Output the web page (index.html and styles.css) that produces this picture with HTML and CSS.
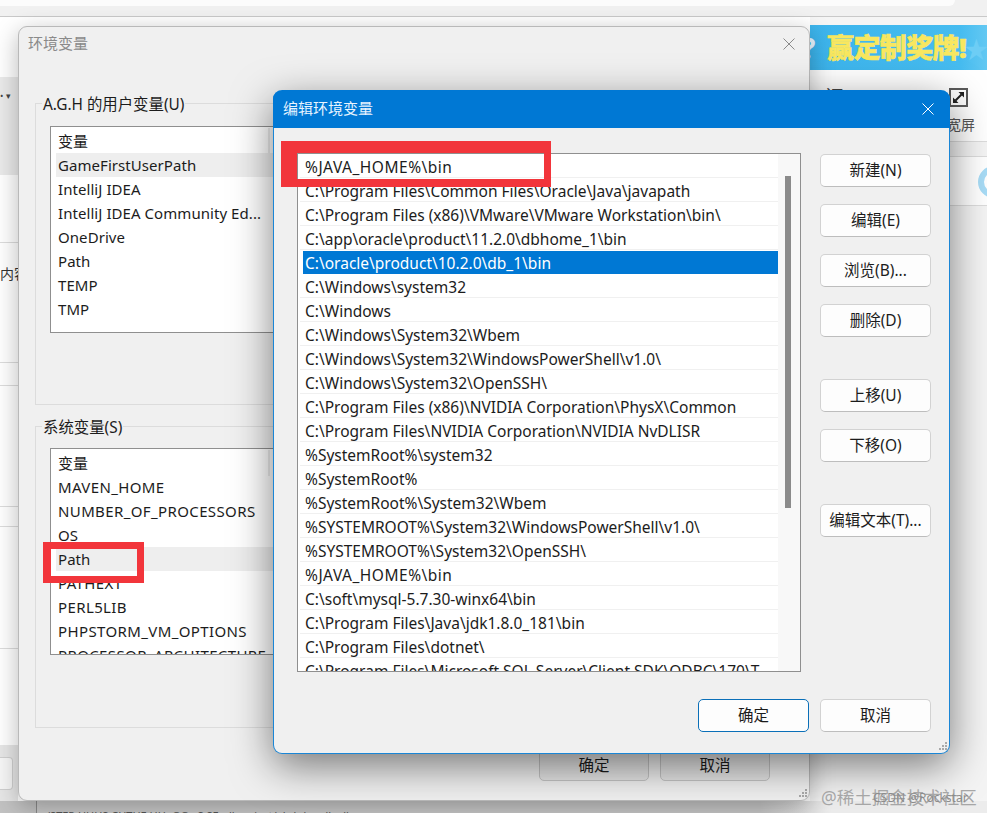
FILE: index.html
```html
<!DOCTYPE html>
<html lang="zh-CN">
<head>
<meta charset="utf-8">
<title>编辑环境变量</title>
<link rel="stylesheet" href="styles.css">
</head>
<body>
<div class="desktop">
  <div class="page">
    <div class="topbar"><div class="addr"></div></div>
    <div class="page-main">
      <div class="side-left">
        <div class="sl a"></div>
        <div class="sl b"><span class="dots">• ▾</span></div>
        <div class="sl c"></div>
        <div class="sl d"><span class="nei">内容</span></div>
        <div class="sl e"></div>
        <div class="sl f"></div>
        <div class="sl g"></div>
        <div class="sl h"></div>
        <div class="sl i"><div class="ghost-btn"></div></div>
      </div>
      <div class="side-right">
        <div class="banner"><span class="q">?</span><span class="prize">赢定制奖牌!</span><span class="star">★</span></div>
        <div class="tools">
          <span class="tool-cut">订</span>
          <span class="tool-cut dot">•</span>
          <div class="tool-wide">
            <svg class="expand" viewBox="0 0 19 19" width="19" height="19"><rect x="1" y="1" width="17" height="17" fill="none" stroke="#5a5a5a" stroke-width="2"/><path d="M6.500 12.500 12.500 6.500" fill="none" stroke="#222" stroke-width="2"/><path d="M15 4H9.500L15 9.500ZM4 15H9.500L4 9.500Z" fill="#222"/></svg>
            <span>宽屏</span>
          </div>
        </div>
        <div class="strip"></div>
        <div class="author"><div class="avatar"></div></div>
        <div class="fill"></div>
      </div>
    </div>
    <div class="bottom-strip"><span>/STEP HHHS CHTHE HH&lt;OOc S:SEmll   roject/abdc/ne dhs.lln</span></div>
  </div>

  <section class="win env-win">
    <header class="env-title"><span>环境变量</span>
      <svg class="close" viewBox="0 0 12 12" width="12" height="12"><path d="M.5.5l11 11M11.500.5l-11 11" stroke="#8a8a8a" fill="none"/></svg>
    </header>
    <div class="group">
      <div class="group-label">A.G.H 的用户变量(U)</div>
      <div class="var-list">
        <div class="var-head"><span>变量</span></div>
        <div class="var-row hl">GameFirstUserPath</div>
        <div class="var-row">IntelliJ IDEA</div>
        <div class="var-row">IntelliJ IDEA Community Ed...</div>
        <div class="var-row">OneDrive</div>
        <div class="var-row">Path</div>
        <div class="var-row">TEMP</div>
        <div class="var-row">TMP</div>
      </div>
    </div>
    <div class="group group-sys">
      <div class="group-label">系统变量(S)</div>
      <div class="var-list">
        <div class="var-head"><span>变量</span></div>
        <div class="var-row caps">MAVEN_HOME</div>
        <div class="var-row caps">NUMBER_OF_PROCESSORS</div>
        <div class="var-row">OS</div>
        <div class="var-row hl">Path</div>
        <div class="var-row caps">PATHEXT</div>
        <div class="var-row caps">PERL5LIB</div>
        <div class="var-row caps">PHPSTORM_VM_OPTIONS</div>
        <div class="var-row caps">PROCESSOR_ARCHITECTURE</div>
      </div>
    </div>
    <footer class="env-foot">
      <button class="btn env-btn">确定</button>
      <button class="btn env-btn">取消</button>
    </footer>
    <svg class="grip grip-env" viewBox="0 0 11 11" width="11" height="11"><path d="M8 1h2v2H8zM5 4h2v2H5zM8 4h2v2H8zM2 7h2v2H2zM5 7h2v2H5zM8 7h2v2H8z" fill="#a9a9a9"/></svg>
  </section>

  <section class="win edit-win">
    <header class="edit-title"><span>编辑环境变量</span>
      <svg class="close" viewBox="0 0 12 12" width="12" height="12"><path d="M.5.5l11 11M11.500.5l-11 11" stroke="#fff" fill="none"/></svg>
    </header>
    <div class="edit-body">
      <div class="path-list">
        <div class="path-rows">
          <div class="path-row wide"><span>%JAVA_HOME%\bin</span></div>
          <div class="path-row"><span>C:\Program Files\Common Files\Oracle\Java\javapath</span></div>
          <div class="path-row"><span>C:\Program Files (x86)\VMware\VMware Workstation\bin\</span></div>
          <div class="path-row"><span>C:\app\oracle\product\11.2.0\dbhome_1\bin</span></div>
          <div class="path-row sel"><span>C:\oracle\product\10.2.0\db_1\bin</span></div>
          <div class="path-row"><span>C:\Windows\system32</span></div>
          <div class="path-row"><span>C:\Windows</span></div>
          <div class="path-row"><span>C:\Windows\System32\Wbem</span></div>
          <div class="path-row"><span>C:\Windows\System32\WindowsPowerShell\v1.0\</span></div>
          <div class="path-row"><span>C:\Windows\System32\OpenSSH\</span></div>
          <div class="path-row"><span>C:\Program Files (x86)\NVIDIA Corporation\PhysX\Common</span></div>
          <div class="path-row"><span>C:\Program Files\NVIDIA Corporation\NVIDIA NvDLISR</span></div>
          <div class="path-row"><span>%SystemRoot%\system32</span></div>
          <div class="path-row"><span>%SystemRoot%</span></div>
          <div class="path-row"><span>%SystemRoot%\System32\Wbem</span></div>
          <div class="path-row"><span>%SYSTEMROOT%\System32\WindowsPowerShell\v1.0\</span></div>
          <div class="path-row"><span>%SYSTEMROOT%\System32\OpenSSH\</span></div>
          <div class="path-row wide"><span>%JAVA_HOME%\bin</span></div>
          <div class="path-row"><span>C:\soft\mysql-5.7.30-winx64\bin</span></div>
          <div class="path-row"><span>C:\Program Files\Java\jdk1.8.0_181\bin</span></div>
          <div class="path-row"><span>C:\Program Files\dotnet\</span></div>
          <div class="path-row"><span>C:\Program Files\Microsoft SQL Server\Client SDK\ODBC\170\T</span></div>
        </div>
        <div class="scroll"><div class="thumb"></div></div>
      </div>
      <div class="side-btns">
        <button class="btn">新建(N)</button>
        <button class="btn">编辑(E)</button>
        <button class="btn">浏览(B)...</button>
        <button class="btn">删除(D)</button>
        <button class="btn gap-top">上移(U)</button>
        <button class="btn">下移(O)</button>
        <button class="btn gap-top">编辑文本(T)...</button>
      </div>
    </div>
    <footer class="edit-foot">
      <button class="btn primary">确定</button>
      <button class="btn">取消</button>
    </footer>
    <svg class="grip grip-edit" viewBox="0 0 11 11" width="11" height="11"><path d="M8 1h2v2H8zM5 4h2v2H5zM8 4h2v2H8zM2 7h2v2H2zM5 7h2v2H5zM8 7h2v2H8z" fill="#a9a9a9"/></svg>
  </section>

  <div class="mark mark-java"></div>
  <div class="mark mark-path"></div>
  <div class="wm"><span class="wm-a">@稀土掘金技术社区</span><span class="wm-b">CSDN @Rockstar</span></div>
</div>
</body>
</html>
```
FILE: styles.css
```css
* { box-sizing: border-box; }
html, body { margin: 0; padding: 0; }
body { width: 987px; height: 813px; overflow: hidden; background: #fff; }
.desktop {
  position: relative; width: 987px; height: 813px; overflow: hidden;
  font-family: "Noto Sans", "Noto Sans CJK SC", sans-serif;
  font-size: 15px; color: #1c1c1c;
}
.page { display: flex; flex-direction: column; height: 813px; background: #fff; }
.topbar { height: 17px; background: #f1f1f1; border-bottom: 1px solid #c9c9c9; flex: none; }
.addr { height: 6px; width: 955px; background: #fcfcfc; border-radius: 0 0 6px 0; }
.page-main { display: flex; justify-content: space-between; height: 784px; flex: none; }
.side-left { width: 18px; display: flex; flex-direction: column; overflow: hidden; }
.sl { flex: none; border-bottom: 1px solid #dcdcdc; position: relative; white-space: nowrap; }
.sl.a { height: 60px; border: 0; }
.sl.b { height: 98px; background: #eaeaea; border: 0; padding-top: 12px; }
.dots { font-size: 9px; line-height: 14px; color: #444; display: block; }
.sl.c { height: 68px; }
.sl.d { height: 120px; padding-top: 20px; }
.nei { font-size: 14px; line-height: 20px; color: #333; }
.sl.e { height: 23px; }
.sl.f { height: 121px; }
.sl.g { height: 20px; }
.sl.h { height: 122px; }
.sl.i { height: 152px; border: 0; padding-top: 108px; background: linear-gradient(#fff 96px, #e6e6e6 96px); }
.ghost-btn { width: 13px; height: 33px; background: #f6f6f6; border: 1px solid #cfcfcf; border-left: 0; border-radius: 0 4px 4px 0; }
.side-right { width: 177px; display: flex; flex-direction: column; background: #f5f5f5; overflow: hidden; }
.banner {
  flex: none; margin-top: 8px; height: 45px; display: flex; align-items: center; overflow: hidden; white-space: nowrap;
  background: linear-gradient(90deg, #3cb4ec, #46bcf0 85%, #63c8f2);
}
.q { color: #e8f6ff; font-weight: 700; font-size: 28px; margin-left: -8px; width: 25px; flex: none; }
.prize { color: #f8e75f; font-weight: 900; font-size: 27px; letter-spacing: -.6px; line-height: 45px; -webkit-text-stroke: .5px #f8e75f; }
.star { color: #6dcdf5; font-size: 24px; margin-left: -2px; }
.tools {
  flex: none; height: 72px; background: #fff; border-bottom: 1px solid #dcdcdc; display: flex; padding-left: 15px; overflow: hidden;
}
.tool-cut { font-size: 18px; line-height: 22px; margin-top: 15px; color: #444; width: 72px; flex: none; }
.tool-cut.dot { width: 52px; }
.tool-wide { display: flex; flex-direction: column; align-items: flex-start; padding-top: 18px; font-size: 14px; color: #555; }
.expand { display: block; margin-bottom: 8px; }
.tool-wide span { line-height: 20px; margin-left: -2px; }
.strip { height: 15px; flex: none; border-bottom: 1px solid #dcdcdc; background: #f4f4f4; }
.author { height: 49px; flex: none; background: #fff; border-bottom: 1px solid #dcdcdc; padding: 9px 0 0 168px; }
.avatar { width: 32px; height: 32px; border-radius: 50%; border: 6px solid #a8dcf6; background: #fff; }
.fill { flex: 1; background: #f4f4f4; }
.bottom-strip {
  height: 12px; flex: none; padding: 9px 0 0 46px; overflow: hidden;
  background: linear-gradient(90deg, #c2c2c2 36px, #8a8a8a 36px, #8a8a8a 37px, #c8c8c8 37px, #c8c8c8 760px, #ececec 830px);
  font-size: 11px; line-height: 12px; color: #555; white-space: pre;
}

.win { position: absolute; }
.env-win {
  left: 18px; top: 26px; width: 792px; height: 775px; padding: 0 16px;
  background: #f0f0f0; border: 1px solid #b9b9b9; border-radius: 9px;
  box-shadow: 0 6px 24px rgba(0,0,0,.28);
}
.env-title { height: 76px; display: flex; justify-content: space-between; padding-top: 6px; color: #8a8a8a; }
.env-title span { margin-left: -7px; line-height: 20px; }
.env-title .close { margin: 5px -2px 0 0; }
.group { height: 302px; border: 1px solid #dcdcdc; padding: 0 14px; }
.group-sys { margin-top: 21px; }
.group-label { margin: -11px 0 0 -8px; width: fit-content; background: #f0f0f0; padding: 0 1px; font-size: 15.400px; line-height: 24px; height: 20px; }
.var-list {
  margin-top: 13px; height: 207px; background: #fff; border: 1px solid #8f8f8f; padding: 3px 5px 0; overflow: hidden;
}
.group-sys .var-list { margin-top: 12px; }
.var-head { height: 24px; padding-left: 2px; margin-top: -1px; margin-bottom: 1px; }
.var-head span { display: block; width: 212px; border-right: 2px solid #ececec; height: 26px; margin-top: -2px; line-height: 26px; }
.var-row { height: 24px; line-height: 25px; padding-left: 2px; white-space: nowrap; letter-spacing: .06px; }
.var-row.caps { letter-spacing: .38px; }
.var-row.hl { background: #eeeeee; }
.env-foot { display: flex; justify-content: flex-end; gap: 11px; padding: 20px 23px 0 0; }
.btn {
  width: 111px; height: 33px; margin: 0; padding: 0 0 2px; flex: none;
  background: #fdfdfd; border: 1px solid #d2d2d2; border-bottom-color: #bdbdbd; border-radius: 5px;
  font: inherit; font-size: 15.500px; color: #1c1c1c; white-space: nowrap;
}
.env-btn { width: 110px; height: 33px; padding: 0; background: #e6e6e6; border-color: #c4c4c4; }
.grip { position: absolute; }
.grip-env { right: 1px; bottom: 1px; }
.grip-edit { right: 1px; bottom: 1px; }

.edit-win {
  left: 273px; top: 90px; width: 677px; height: 664px;
  background: #f0f0f0; border: 1px solid #1a86d6; border-top: 0; border-radius: 9px;
  box-shadow: 0 12px 40px rgba(0,0,0,.5);
}
.edit-title {
  height: 38px; margin: 0 -1px; background: #0078d4; color: #e8f4ff; border-radius: 9px 9px 0 0;
  display: flex; justify-content: space-between; align-items: flex-start; padding: 8px 16px 0 10px;
  line-height: 20px;
}
.edit-title .close { margin-top: 5px; }
.edit-body { display: flex; padding: 25px 0 0 23px; }
.path-list {
  width: 504px; height: 519px; background: #fff; border: 1px solid #8f8f8f; display: flex; overflow: hidden; flex: none;
}
.path-rows { flex: 1; min-width: 0; padding: 0 0 0 2px; font-size: 15.500px; }
.path-row { height: 24px; border-bottom: 1px solid #f0f0f0; padding: 0 0 0 3px; line-height: 27px; white-space: nowrap; overflow: hidden; }
.path-row.wide { letter-spacing: .5px; }
.path-row span { display: block; padding-left: 2px; height: 23px; }
.path-row.sel { border-bottom: 0; padding-top: 1px; line-height: 24px; }
.path-row.sel span { background: #0078d4; color: #fff; }
.scroll { width: 22px; flex: none; background: #f8f8f8; padding: 22px 0 0 7px; }
.thumb { width: 6px; height: 332px; background: #8b8b8b; }
.side-btns { display: flex; flex-direction: column; gap: 17px; margin-left: 19px; padding-top: 1px; }
.gap-top { margin-top: 25px; }
.edit-foot { display: flex; justify-content: flex-end; gap: 11px; padding: 27px 18px 0 0; }
.primary { border: 1.500px solid #0a6fb8; }

.mark { position: absolute; border-style: solid; border-color: #f2353b; pointer-events: none; }
.mark-java { left: 281px; top: 141px; width: 270px; height: 46px; border-width: 12px 7px 8px 16px; }
.mark-path { left: 43px; top: 542px; width: 101px; height: 41px; border-width: 7px 7px 7px 8px; }
.wm { position: absolute; left: 821px; top: 784px; width: 166px; height: 26px; white-space: nowrap; }
.wm-a { font-size: 17.500px; line-height: 26px; color: #a6a6a6; }
.wm-b { position: absolute; left: 52px; top: 5px; font-size: 12px; line-height: 18px; color: #8c8c8c; }
```
